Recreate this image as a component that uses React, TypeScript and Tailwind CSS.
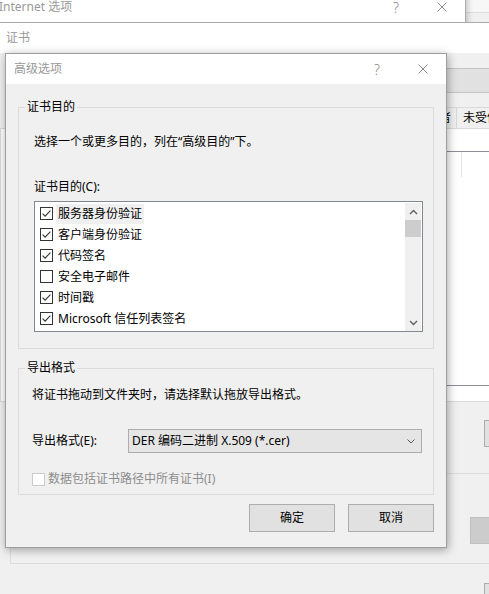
import React from 'react';

type Purpose = { label: string; checked: boolean };

const purposes: Purpose[] = [
  { label: '服务器身份验证', checked: true },
  { label: '客户端身份验证', checked: true },
  { label: '代码签名', checked: true },
  { label: '安全电子邮件', checked: false },
  { label: '时间戳', checked: true },
  { label: 'Microsoft 信任列表签名', checked: true },
];

// tab strip of the certificate manager behind the dialog
const storeTabs = [
  { label: '个人', width: 'w-[40px]' },
  { label: '其他人', width: 'w-[52px]' },
  { label: '中间证书颁发机构', width: 'w-[108px]' },
  { label: '受信任的根证书颁发机构', width: 'w-[144px]' },
  { label: '受信任的发布者', width: 'w-[96px]' },
  { label: '未受信任的发布者', width: 'w-[108px]' },
];

const CloseGlyph: React.FC = () => (
  <svg width="10" height="10" viewBox="0 0 10 10" className="block">
    <path d="M0.5 0.5L9.5 9.5M9.5 0.5L0.5 9.5" stroke="#8a8a8a" strokeWidth="1" fill="none" />
  </svg>
);

const Caption: React.FC<{ title: string; className?: string }> = ({ title, className = '' }) => (
  <div className={`flex h-[30px] items-center bg-white ${className}`}>
    <span className="pl-[8px] text-[12px] leading-[16px] text-[#999999]">{title}</span>
    <div className="ml-auto flex h-full">
      <span className="flex w-[46px] items-center justify-center text-[14px] font-light text-[#8a8a8a]">?</span>
      <span className="flex w-[46px] items-center justify-center">
        <CloseGlyph />
      </span>
    </div>
  </div>
);

const CheckBox: React.FC<{ checked: boolean; disabled?: boolean }> = ({ checked, disabled }) => (
  <svg width="13" height="13" viewBox="0 0 13 13" className="block shrink-0">
    <rect x="0.5" y="0.5" width="12" height="12" fill="#ffffff" stroke={disabled ? '#cccccc' : '#333333'} />
    {checked && <path d="M2.6 6.6L5.1 9.1L10.4 3.6" stroke="#333333" strokeWidth="1.1" fill="none" />}
  </svg>
);

const Chevron: React.FC<{ up?: boolean }> = ({ up }) => (
  <svg width="9" height="6" viewBox="0 0 9 6" className="block">
    <path d={up ? 'M1 5L4.5 1.5L8 5' : 'M1 1L4.5 4.5L8 1'} stroke="#606060" strokeWidth="1.4" fill="none" />
  </svg>
);

const GroupBox: React.FC<{ legend: string; className?: string; children: React.ReactNode }> = ({
  legend,
  className = '',
  children,
}) => (
  <fieldset className={`m-0 min-w-0 border border-[#dcdcdc] p-0 ${className}`}>
    <legend className="ml-[6px] px-[2px] text-[12px] leading-[16px] text-black">{legend}</legend>
    {children}
  </fieldset>
);

const PurposeList: React.FC = () => (
  <div className="flex h-[131px] w-[389px] border border-[#828790] bg-white">
    <div className="flex-1 pl-[5px] pt-[1px]">
      {purposes.map((p, i) => (
        <div key={p.label} className="flex h-[21px] items-center">
          <CheckBox checked={p.checked} />
          <span
            className={`ml-[3px] h-[20px] px-[2px] text-[12px] leading-[20px] text-black ${
              i === 0 ? 'bg-[#f0f0f0]' : ''
            }`}
          >
            {p.label}
          </span>
        </div>
      ))}
    </div>
    <div className="mr-[1px] mt-[1px] flex w-[16px] flex-col bg-[#f0f0f0]">
      <div className="flex h-[17px] items-center justify-center">
        <Chevron up />
      </div>
      <div className="h-[17px] bg-[#cdcdcd]" />
      <div className="flex-1" />
      <div className="flex h-[17px] items-center justify-center">
        <Chevron />
      </div>
    </div>
  </div>
);

const AdvancedOptions: React.FC = () => (
  <div className="absolute left-[5px] top-[53px] w-[442px] border border-[#9e9e9e] bg-[#f0f0f0] shadow-[1px_2px_9px_rgba(0,0,0,0.35)]">
    <Caption title="高级选项" />
    <div className="flex flex-col px-[12px] pb-[15px] pt-[15px] text-[12px] leading-[16px] text-black">
      <GroupBox legend="证书目的">
        <div className="flex flex-col pb-[16px] pl-[15px] pr-[10px] pt-[19px]">
          <p>选择一个或更多目的，列在“高级目的”下。</p>
          <p className="mt-[29px]">证书目的(C):</p>
          <div className="mt-[6px]">
            <PurposeList />
          </div>
        </div>
      </GroupBox>

      <GroupBox legend="导出格式" className="mt-[11px]">
        <div className="flex flex-col pb-[7px] pl-[13px] pr-[11px] pt-[11px]">
          <p>将证书拖动到文件夹时，请选择默认拖放导出格式。</p>
          <div className="mt-[26px] flex h-[24px] items-center">
            <span>导出格式(E):</span>
            <div className="ml-auto flex h-full w-[294px] items-center border border-[#adadad] bg-[#e5e5e5] pl-[3px] pr-[6px]">
              <span>DER 编码二进制 X.509 (*.cer)</span>
              <svg width="8" height="5" viewBox="0 0 8 5" className="ml-auto block">
                <path d="M0.5 0.5L4 4L7.5 0.5" stroke="#555555" strokeWidth="1" fill="none" />
              </svg>
            </div>
          </div>
          <label className="mt-[18px] flex h-[16px] items-center">
            <CheckBox checked={false} disabled />
            <span className="ml-[3px] text-[#8d8d8d]">数据包括证书路径中所有证书(I)</span>
          </label>
        </div>
      </GroupBox>

      <div className="mt-[9px] flex justify-end gap-[13px]">
        <button className="flex h-[28px] w-[86px] items-center justify-center border border-[#adadad] bg-[#e1e1e1]">
          确定
        </button>
        <button className="flex h-[28px] w-[86px] items-center justify-center border border-[#adadad] bg-[#e1e1e1]">
          取消
        </button>
      </div>
    </div>
  </div>
);

const CertificateManager: React.FC = () => (
  <div className="absolute left-0 top-[22px] h-[600px] w-[560px] border-t border-[#a9a9a9] bg-[#f0f0f0] text-[12px] leading-[16px]">
    <div className="flex h-[30px] items-center bg-white pl-[6px] text-[#999999]">证书</div>
    <div className="flex flex-col pt-[15px]">
      <div className="ml-[90px] h-[25px] border border-[#c4c4c4] bg-[#e1e1e1]" />

      <div className="mt-[14px] flex h-[21px] pl-[16px]">
        {storeTabs.map((t, i) => (
          <div
            key={t.label}
            className={`${t.width} flex shrink-0 items-center overflow-hidden whitespace-nowrap border-l border-t border-[#d9d9d9] px-[6px] text-black ${
              i === storeTabs.length - 1 ? 'border-r' : ''
            }`}
          >
            {t.label}
          </div>
        ))}
      </div>

      <div className="flex h-[274px] flex-col border border-[#d9d9d9] bg-white pb-[15px] pt-[22px]">
        <div className="ml-[10px] h-[235px] border border-[#8c8f96] bg-white">
          <div className="h-[25px] w-[450px] border-r border-[#e5e5e5]" />
        </div>
      </div>

      <div className="mt-[18px] flex h-[27px]">
        <div className="ml-[484px] w-[75px] border border-[#adadad] bg-[#e1e1e1]" />
      </div>

      <div className="ml-[10px] mt-[26px] h-[91px] w-[540px] border border-[#dcdcdc] pt-[43px]">
        <div className="ml-[459px] h-[27px] w-[75px] border border-[#bfbfbf] bg-[#cccccc]" />
      </div>

      <div className="mt-[19px] flex h-[27px]">
        <div className="ml-[484px] w-[75px] border border-[#adadad] bg-[#e1e1e1]" />
      </div>
    </div>
  </div>
);

export default function App() {
  return (
    <div className="relative h-[594px] w-[489px] overflow-hidden bg-[#f0f0f0] font-['Noto_Sans','Noto_Sans_CJK_SC',sans-serif]">
      {/* window peeking out at the top right */}
      <div className="absolute left-[440px] top-[-20px] h-[33px] w-[120px] border-b border-[#dedede] bg-[#f7f7f7]" />

      <div className="absolute left-[-10px] top-[-9px] h-[60px] w-[476px] border border-[#a9a9a9] bg-[#f0f0f0] shadow-[2px_0_6px_rgba(0,0,0,0.2)]">
        <Caption title="Internet 选项" />
      </div>

      <CertificateManager />
      <AdvancedOptions />
    </div>
  );
}
